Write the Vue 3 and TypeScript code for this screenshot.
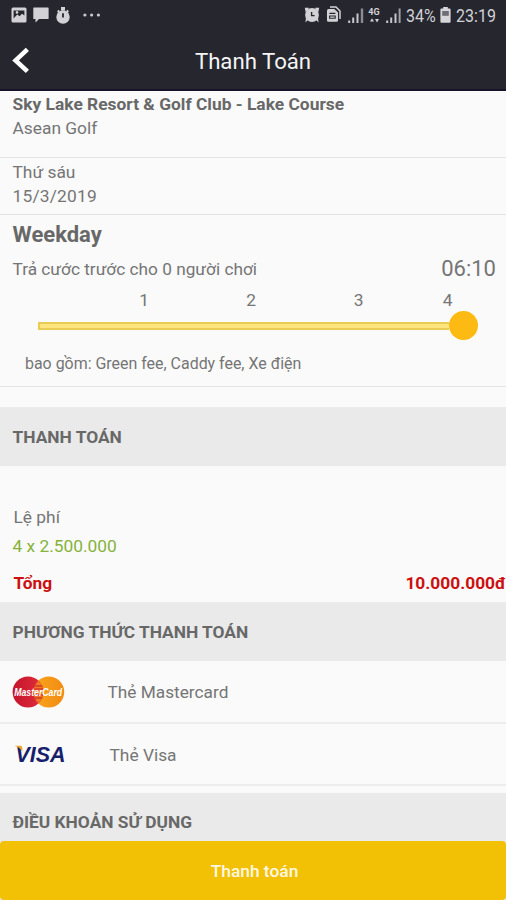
<script setup lang="ts">
const ticks: number[] = [1, 2, 3, 4]
</script>

<template>
  <main class="screen">
    <div class="status">
      <div class="status-left">
        <svg width="16" height="16" viewBox="0 0 16 16">
          <rect x="0.5" y="0.5" width="15" height="15" rx="1.5" fill="#d2d2d6" />
          <path d="M2.6 3.4H13.4V8.6L11 6.8 8.6 9.2 6.2 7.4 2.6 11.4Z" fill="#26262f" />
          <circle cx="6" cy="5.4" r="1.3" fill="#d2d2d6" />
        </svg>
        <svg width="16" height="16" viewBox="0 0 16 16">
          <path d="M1 0.5H15Q15.6 0.5 15.6 1.2V11.4Q15.6 12 15 12H6L2.5 15.6V12H1Q0.3 12 0.3 11.4V1.2Q0.3 0.5 1 0.5Z" fill="#d2d2d6" />
        </svg>
        <svg width="16" height="17" viewBox="0 0 16 17">
          <path d="M6 0H10V3.5H6ZM2 4.2 3.6 2.8 5 4.2 3.4 5.6ZM14 4.2 12.4 2.8 11 4.2 12.6 5.6Z" fill="#d2d2d6" />
          <circle cx="8" cy="10" r="6.7" fill="#d2d2d6" />
          <path d="M8 6.2V10.6" stroke="#26262f" stroke-width="1.8" />
        </svg>
        <svg class="dots" width="18" height="4" viewBox="0 0 18 4">
          <circle cx="1.9" cy="2" r="1.6" fill="#c9c9cf" />
          <circle cx="8.6" cy="2" r="1.6" fill="#c9c9cf" />
          <circle cx="15.4" cy="2" r="1.6" fill="#c9c9cf" />
        </svg>
      </div>
      <div class="status-right">
        <svg class="alarm" width="16" height="16" viewBox="0 0 16 16">
          <path d="M0.8 0.8H5L4 3 1.6 5ZM15.2 0.8H11L12 3 14.4 5ZM1.4 15.5 2 11H6ZM14.6 15.5 14 11H10Z" fill="#d2d2d6" />
          <circle cx="8" cy="8" r="6.9" fill="#d2d2d6" />
          <path d="M7.6 5V8.6H10.6" fill="none" stroke="#26262f" stroke-width="1.4" />
        </svg>
        <svg class="docs" width="15" height="17" viewBox="0 0 15 17">
          <path d="M4 1H10L14 5V13" fill="none" stroke="#d2d2d6" stroke-width="1.5" />
          <path d="M2.5 3H8.2L12 6.6V14.2Q12 15.7 10.5 15.7H2.5Q1 15.7 1 14.2V4.5Q1 3 2.5 3Z" fill="#d2d2d6" />
          <path d="M3.4 7.4H9.4M3.6 12.2H9.2V10H3.6Z" fill="none" stroke="#26262f" stroke-width="1.1" />
        </svg>
        <svg class="signal" width="16" height="15" viewBox="0 0 16 15">
          <path d="M1.2 12.5V15M5.2 9.5V15M9.5 5.5V15" stroke="#c6c6cc" stroke-width="2" />
          <path d="M14 0.5V15" stroke="#8c8c94" stroke-width="2.4" />
        </svg>
        <div class="net">
          <span>4G</span>
          <svg width="9" height="5" viewBox="0 0 9 5">
            <path d="M0 3.6 2 0.2 4 3.6ZM5 1H9L7 4.6Z" fill="#d2d2d6" />
          </svg>
        </div>
        <svg class="signal" width="16" height="15" viewBox="0 0 16 15">
          <path d="M1.2 12.5V15M5.2 9.5V15M9.5 5.5V15" stroke="#c6c6cc" stroke-width="2" />
          <path d="M13.6 0.5V15" stroke="#a0a0a8" stroke-width="2" />
        </svg>
        <span class="status-text percent">34%</span>
        <svg class="battery" width="11" height="16" viewBox="0 0 11 16">
          <path d="M3.2 0H7.8V1.6H9.6Q10.6 1.6 10.6 2.6V14.8Q10.6 15.8 9.6 15.8H1.4Q0.4 15.8 0.4 14.8V2.6Q0.4 1.6 1.4 1.6H3.2Z" fill="#d6d6da" />
          <rect x="2.2" y="4" width="6.6" height="4.8" fill="#6d6d75" />
        </svg>
        <span class="status-text clock">23:19</span>
      </div>
    </div>

    <header class="bar">
      <svg class="back" width="18" height="27" viewBox="0 0 18 27">
        <path d="M15.4 2.4 3.6 13.4 15.4 24.4" fill="none" stroke="#fff" stroke-width="4.6" />
      </svg>
      <h1>Thanh Toán</h1>
    </header>

    <section class="block course">
      <strong>Sky Lake Resort &amp; Golf Club - Lake Course</strong>
      <span>Asean Golf</span>
    </section>

    <section class="block date">
      <span>Thứ sáu</span>
      <span class="day">15/3/2019</span>
    </section>

    <section class="block booking">
      <h2>Weekday</h2>
      <div class="prepay">
        <span>Trả cước trước cho 0 người chơi</span>
        <span class="time">06:10</span>
      </div>
      <div class="ticks">
        <span v-for="n in ticks" :key="n">{{ n }}</span>
      </div>
      <div class="slider">
        <div class="track"></div>
        <div class="thumb"></div>
      </div>
      <p class="includes">bao gồm: Green fee, Caddy fee, Xe điện</p>
    </section>

    <h3 class="section first">THANH TOÁN</h3>
    <section class="fees">
      <span class="label">Lệ phí</span>
      <span class="amount">4 x 2.500.000</span>
      <div class="total">
        <span>Tổng</span>
        <span class="sum">10.000.000đ</span>
      </div>
    </section>

    <h3 class="section method">PHƯƠNG THỨC THANH TOÁN</h3>
    <div class="pay master">
      <svg width="54" height="32" viewBox="0 0 54 32">
        <defs>
          <linearGradient id="mc-red" x1="0" x2="1">
            <stop offset="0" stop-color="#c4122c" />
            <stop offset="1" stop-color="#e2303c" />
          </linearGradient>
          <linearGradient id="mc-orange" x1="0" x2="1">
            <stop offset="0" stop-color="#f8a51c" />
            <stop offset="1" stop-color="#f28c13" />
          </linearGradient>
        </defs>
        <circle cx="36.8" cy="16" r="15.4" fill="url(#mc-orange)" />
        <circle cx="16" cy="16" r="15.4" fill="url(#mc-red)" />
        <path d="M26.4 4.7A15.4 15.4 0 0 1 26.4 27.3A15.4 15.4 0 0 1 26.4 4.7Z" fill="#ee7a22" />
        <path d="M22.6 10H30.2M21.7 13H31.1M21.7 19H31.1M22.6 22H30.2" stroke="#d9382c" stroke-width="1.3" />
        <text x="2.2" y="19.9" textLength="48" lengthAdjust="spacingAndGlyphs" class="mc-text">MasterCard</text>
      </svg>
      <span>Thẻ Mastercard</span>
    </div>
    <div class="pay visa">
      <svg width="56" height="28" viewBox="0 0 56 28">
        <text x="1.5" y="21.8" textLength="50" lengthAdjust="spacingAndGlyphs" class="visa-text">VISA</text>
        <path d="M0.8 5.8H6.6Q8 6 8.2 7.6L8.6 11.4Q5.6 7.4 0.8 5.8Z" fill="#eba52c" />
      </svg>
      <span>Thẻ Visa</span>
    </div>

    <h3 class="section terms">ĐIỀU KHOẢN SỬ DỤNG</h3>
    <div class="footer"><button type="button">Thanh toán</button></div>
  </main>
</template>

<style>
body {
  margin: 0;
  background: #fafafa;
}
</style>

<style scoped>
* {
  box-sizing: border-box;
}
.screen {
  width: 506px;
  height: 900px;
  overflow: hidden;
  display: flex;
  flex-direction: column;
  background: #fafafa;
  color: #757575;
  font-family: Roboto, sans-serif;
  font-size: 17.35px;
  line-height: 24px;
}
.screen > * {
  flex: none;
}
h1, h2, h3, p {
  margin: 0;
}
svg {
  display: block;
  flex: none;
  overflow: visible;
}
.status {
  height: 32px;
  background: #26262f;
  display: flex;
  justify-content: space-between;
}
.status-left {
  display: flex;
  gap: 6px;
  padding: 7px 0 0 11px;
}
.dots {
  margin: 6px 0 0 6px;
}
.status-right {
  display: flex;
  align-items: flex-start;
  padding: 0 11.5px 0 0;
}
.alarm {
  margin: 7px 6px 0 0;
}
.docs {
  margin: 6px 7px 0 0;
}
.signal {
  margin-top: 8px;
}
.net {
  width: 13px;
  margin: 8px 5px 0 4px;
  display: flex;
  flex-direction: column;
  align-items: center;
  gap: 2px;
  color: #d2d2d6;
  font-size: 9px;
  font-weight: 700;
  line-height: 8px;
}
.status-text {
  display: block;
  color: #d2d2d6;
  font-size: 18px;
  line-height: 32px;
  transform: scaleX(0.89);
  transform-origin: 0 50%;
}
.percent {
  width: 30px;
  margin-left: 4px;
}
.battery {
  margin: 7px 5px 0 4px;
}
.clock {
  width: 39px;
}
.bar {
  height: 59px;
  background: #26262f;
  border-bottom: 2px solid #17142a;
  display: grid;
  grid-template-columns: 60px 1fr 60px;
  align-items: center;
}
.back {
  margin: 0 0 0 12px;
}
h1 {
  color: #f4f4f5;
  font-size: 22.2px;
  font-weight: 400;
  line-height: 28px;
  text-align: center;
}
.block {
  border-bottom: 1px solid #e3e3e3;
  padding: 0 10px 0 12.5px;
  display: flex;
  flex-direction: column;
}
.course {
  height: 67px;
  padding-top: 1px;
}
.course strong {
  color: #686868;
  letter-spacing: 0.02px;
}
.date {
  height: 57px;
  padding-top: 2px;
}
.day {
  letter-spacing: 0.2px;
}
.booking {
  height: 172px;
  padding-top: 6px;
}
h2 {
  color: #686868;
  font-size: 22px;
  font-weight: 700;
  line-height: 28px;
}
.prepay {
  height: 28px;
  margin-top: 6px;
  display: flex;
  justify-content: space-between;
  font-size: 17.25px;
  line-height: 28px;
}
.time {
  font-size: 22px;
}
.ticks {
  display: grid;
  grid-template-columns: 107px 107.5px 107.5px 70px;
  padding-left: 77.5px;
  margin-top: 5px;
}
.ticks span {
  width: 108px;
  text-align: center;
}
.ticks span:last-child {
  width: 71px;
}
.slider {
  height: 29px;
  margin: -1px 18px 0 25.5px;
  display: flex;
  align-items: center;
}
.track {
  flex: 1;
  height: 8px;
  background: #ffe57c;
  border: 2px solid #eacb55;
  border-right: 0;
}
.thumb {
  width: 29px;
  height: 29px;
  border-radius: 50%;
  background: #fdba12;
}
.includes {
  margin-top: 12px;
  padding-left: 12.5px;
  font-size: 15.95px;
}
.section {
  background: #eaeaea;
  color: #686868;
  font-size: 17.35px;
  font-weight: 700;
  line-height: 24px;
  padding-left: 12.5px;
}
.first {
  margin-top: 20px;
  height: 59px;
  padding-top: 18px;
}
.fees {
  height: 136px;
  padding: 39px 0 0 13.5px;
  display: flex;
  flex-direction: column;
}
.amount {
  margin: 5px 0 0 -1px;
  color: #86b23a;
}
.total {
  margin-top: 13px;
  display: flex;
  justify-content: space-between;
  color: #cc1010;
  font-weight: 700;
}
.method {
  height: 59px;
  padding-top: 18px;
}
.pay {
  display: flex;
  align-items: center;
  border-bottom: 2px solid #ededed;
  padding-left: 12px;
}
.master {
  height: 63px;
}
.master span {
  padding-left: 41.5px;
  font-size: 17.25px;
}
.visa {
  height: 62px;
  padding-left: 14px;
}
.visa span {
  padding-left: 39.5px;
  margin-top: 1px;
}
.mc-text {
  font: italic 700 11.5px "Liberation Sans", sans-serif;
  fill: #fff;
}
.visa-text {
  font: italic 700 22px "Liberation Sans", sans-serif;
  fill: #17206b;
}
.terms {
  margin-top: 7px;
  height: 48px;
  padding-top: 17px;
}
.footer {
  height: 59px;
  background: #eaeaea;
}
button {
  width: 100%;
  height: 59px;
  border: 0;
  border-radius: 4px;
  background: #f2c106;
  color: #fff8e4;
  font: 500 17.35px/24px Roboto, sans-serif;
  padding: 0 0 0 3px;
}
</style>
